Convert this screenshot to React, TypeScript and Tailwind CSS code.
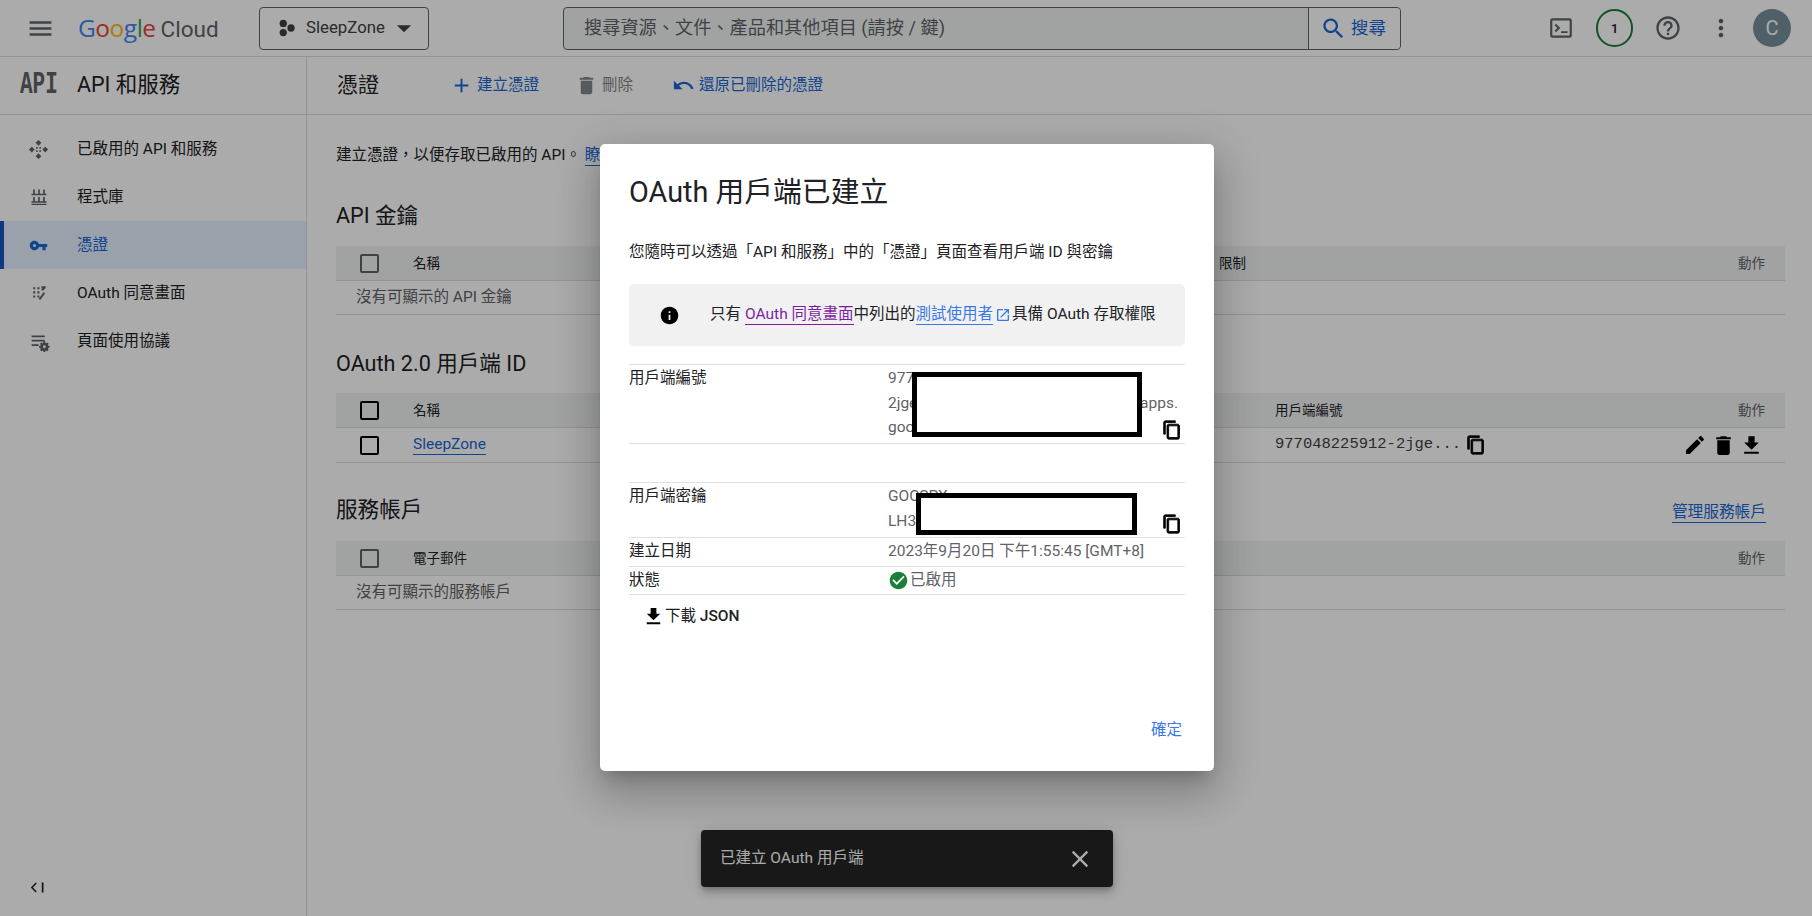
import type { ReactNode } from "react";

const PATHS = {
  menu: "M3 18h18v-2H3v2zm0-5h18v-2H3v2zm0-7v2h18V6H3z",
  add: "M19 13h-6v6h-2v-6H5v-2h6V5h2v6h6v2z",
  trash: "M6 19c0 1.1.9 2 2 2h8c1.1 0 2-.9 2-2V7H6v12zM19 4h-3.5l-1-1h-5l-1 1H5v2h14V4z",
  undo: "M12.5 8c-2.65 0-5.05.99-6.9 2.6L2 7v9h9l-3.62-3.62c1.39-1.16 3.16-1.88 5.12-1.88 3.54 0 6.55 2.31 7.6 5.5l2.37-.78C21.08 11.03 17.15 8 12.5 8z",
  search: "M15.5 14h-.79l-.28-.27C15.41 12.59 16 11.11 16 9.5 16 5.91 13.09 3 9.5 3S3 5.91 3 9.5 5.91 16 9.5 16c1.61 0 3.09-.59 4.23-1.57l.27.28v.79l5 4.99L20.49 19l-4.99-5zm-6 0C7.01 14 5 11.99 5 9.5S7.01 5 9.5 5 14 7.01 14 9.5 11.99 14 9.5 14z",
  help: "M11 18h2v-2h-2v2zm1-16C6.48 2 2 6.48 2 12s4.48 10 10 10 10-4.48 10-10S17.52 2 12 2zm0 18c-4.41 0-8-3.59-8-8s3.59-8 8-8 8 3.59 8 8-3.59 8-8 8zm0-14c-2.21 0-4 1.79-4 4h2c0-1.1.9-2 2-2s2 .9 2 2c0 2-3 1.75-3 5h2c0-2.25 3-2.5 3-5 0-2.21-1.79-4-4-4z",
  more: "M12 8c1.1 0 2-.9 2-2s-.9-2-2-2-2 .9-2 2 .9 2 2 2zm0 2c-1.1 0-2 .9-2 2s.9 2 2 2 2-.9 2-2-.9-2-2-2zm0 6c-1.1 0-2 .9-2 2s.9 2 2 2 2-.9 2-2-.9-2-2-2z",
  key: "M12.65 10C11.83 7.67 9.61 6 7 6c-3.31 0-6 2.69-6 6s2.69 6 6 6c2.61 0 4.83-1.67 5.65-4H17v4h4v-4h2v-4H12.65zM7 14c-1.1 0-2-.9-2-2s.9-2 2-2 2 .9 2 2-.9 2-2 2z",
  copy: "M16 1H4c-1.1 0-2 .9-2 2v14h2V3h12V1zm3 4H8c-1.1 0-2 .9-2 2v14c0 1.1.9 2 2 2h11c1.1 0 2-.9 2-2V7c0-1.1-.9-2-2-2zm0 16H8V7h11v14z",
  edit: "M3 17.25V21h3.75L17.81 9.94l-3.75-3.75L3 17.25zM20.71 7.04c.39-.39.39-1.02 0-1.41l-2.34-2.34c-.39-.39-1.02-.39-1.41 0l-1.83 1.83 3.75 3.75 1.83-1.83z",
  download: "M19 9h-4V3H9v6H5l7 7 7-7zM5 18v2h14v-2H5z",
  info: "M12 2C6.48 2 2 6.48 2 12s4.48 10 10 10 10-4.48 10-10S17.52 2 12 2zm1 15h-2v-6h2v6zm0-8h-2V7h2v2z",
  check: "M12 2C6.48 2 2 6.48 2 12s4.48 10 10 10 10-4.48 10-10S17.52 2 12 2zm-2 15l-5-5 1.41-1.41L10 14.17l7.59-7.59L19 8l-9 9z",
  close: "M19 6.41L17.59 5 12 10.59 6.41 5 5 6.41 10.59 12 5 17.59 6.41 19 12 13.41 17.59 19 19 17.59 13.41 12 19 6.41z",
  external: "M19 19H5V5h7V3H5c-1.11 0-2 .89-2 2v14c0 1.1.89 2 2 2h14c1.1 0 2-.9 2-2v-7h-2v7zM14 3v2h3.59l-9.83 9.83 1.41 1.41L19 6.41V10h2V3h-7z",
  caret: "M7 10l5 5 5-5z",
  project: "M9 3a4 4 0 1 1 0 8 4 4 0 0 1 0-8zm0 10a4 4 0 1 1 0 8 4 4 0 0 1 0-8zm8.5-5a4 4 0 1 1 0 8 4 4 0 0 1 0-8z",
  terminal: "M20 3H4a2 2 0 0 0-2 2v14a2 2 0 0 0 2 2h16a2 2 0 0 0 2-2V5a2 2 0 0 0-2-2zm0 16H4V5h16v14zM6 9.4 7.4 8l4 4-4 4L6 14.6 8.6 12 6 9.4zM12 15h6v1.6h-6V15z",
  services: "M12 2l3 3-3 3-3-3 3-3zM5 9l3 3-3 3-3-3 3-3zm14 0l3 3-3 3-3-3 3-3zm-7 7l3 3-3 3-3-3 3-3zM9.5 9.5h1.6v1.6H9.5zm3.4 0h1.6v1.6h-1.6zm-3.4 3.4h1.6v1.6H9.5zm3.4 0h1.6v1.6h-1.6z",
  library: "M5 3h2v5H5zm6 0h2v5h-2zm6 0h2v5h-2zM3 8h18v2H3zM5 12h2v5H5zm6 0h2v5h-2zm6 0h2v5h-2zM3 17h18v2H3zM3 20h18v1.5H3z",
  consent: "M5 5h2.5v2.5H5zm5 0h2.5v2.5H10zm-5 5h2.5v2.5H5zm0 5h2.5v2.5H5zm5 0h2.5v2.5H10zM15 4h5v2l-3 3h-2V7l1-1h-1zm2.5 7 2 1.2-6 8.3-2-1.2zM10 10h2.5v2.5H10z",
  usage: "M3 5h15v2H3zm0 5h15v2H3zm0 5h8v2H3zm14.5-3 1 .1.3 1.5.9.4 1.3-.8 1.4 1.4-.8 1.3.4.9 1.5.3v2l-1.5.3-.4.9.8 1.3-1.4 1.4-1.3-.8-.9.4-.3 1.5h-2l-.3-1.5-.9-.4-1.3.8-1.4-1.4.8-1.3-.4-.9-1.5-.3v-2l1.5-.3.4-.9-.8-1.3 1.4-1.4 1.3.8.9-.4.3-1.5zm0 4.4a1.6 1.6 0 1 0 0 3.2 1.6 1.6 0 0 0 0-3.2z",
  collapse: "M11 6.5 9.5 5l-7 7 7 7 1.5-1.5L5.5 12zM18 5h2.5v14H18z",
};

function Icon({ name, className }: { name: keyof typeof PATHS; className: string }) {
  return (
    <svg viewBox="0 0 24 24" fill="currentColor" className={`shrink-0 ${className}`}>
      <path d={PATHS[name]} />
    </svg>
  );
}

function Checkbox({ dim }: { dim?: boolean }) {
  return (
    <span className={`ml-[24px] block h-[19px] w-[19px] rounded-[2px] border-2 ${dim ? "border-[#5f6368]" : "border-black"}`} />
  );
}

const NAV = [
  { icon: "services", label: "已啟用的 API 和服務", size: "ml-[23px] h-[23px] w-[23px] text-[#5f6368]" },
  { icon: "library", label: "程式庫", size: "ml-[25px] h-[20px] w-[20px] text-[#5f6368]" },
  { icon: "key", label: "憑證", active: true, size: "ml-[25px] h-[19px] w-[19px] text-[#1967d2]" },
  { icon: "consent", label: "OAuth 同意畫面", size: "ml-[25px] h-[20px] w-[20px] text-[#5f6368]" },
  { icon: "usage", label: "頁面使用協議", size: "ml-[25px] h-[21px] w-[21px] text-[#5f6368]" },
] as const;

function Sidebar() {
  return (
    <aside className="flex w-[307px] shrink-0 flex-col border-r border-[#dadce0]">
      <div className="flex h-[58px] items-center border-b border-[#dadce0]">
        <span className="ml-[20px] w-[57px] origin-center scale-y-[1.45] font-['Liberation_Mono'] text-[21px] font-bold leading-none text-[#5f6368]">API</span>
        <span className="text-[21.5px] text-[#202124]">API 和服務</span>
      </div>
      <nav className="mt-[10px] flex-1">
        {NAV.map((n) => {
          const active = "active" in n;
          return (
            <div
              key={n.label}
              className={`relative flex h-[48px] items-center border-l-4 ${active ? "border-[#1a56c4] bg-[#e8f0fe] text-[#1967d2]" : "border-transparent text-[#202124]"}`}
            >
              <Icon name={n.icon} className={n.size} />
              <span className="absolute left-[73px] top-[13px] text-[15.5px]">{n.label}</span>
            </div>
          );
        })}
      </nav>
      <div className="flex h-[60px] pl-[29px] pt-[23px] text-[#202124]">
        <Icon name="collapse" className="h-[17px] w-[17px]" />
      </div>
    </aside>
  );
}

function Header() {
  return (
    <header className="flex h-[57px] shrink-0 items-center border-b border-[#dadce0]">
      <Icon name="menu" className="ml-[26px] h-[29px] w-[29px] text-[#5f6368]" />
      <div className="ml-[23px] flex w-[158px] items-baseline leading-none">
        <span className="font-['Open_Sans'] text-[24.5px] tracking-[-0.5px]">
          <span className="text-[#4285f4]">G</span>
          <span className="text-[#ea4335]">o</span>
          <span className="text-[#fbbc04]">o</span>
          <span className="text-[#4285f4]">g</span>
          <span className="text-[#34a853]">l</span>
          <span className="text-[#ea4335]">e</span>
        </span>
        <span className="ml-[5px] text-[22.5px] text-[#5f6368]">Cloud</span>
      </div>
      <div className="ml-[23px] flex h-[43px] w-[170px] items-center rounded-[4px] border border-[#5f6368] text-[#3c4043]">
        <Icon name="project" className="ml-[15px] h-[22px] w-[22px]" />
        <span className="ml-[9px] text-[16.8px]">SleepZone</span>
        <Icon name="caret" className="ml-[2px] h-[34px] w-[34px]" />
      </div>
      <div className="ml-[134px] flex h-[43px] w-[838px] items-center rounded-[4px] border border-[#5f6368] bg-[#f1f3f4]">
        <span className="ml-[20px] flex-1 text-[18.2px] text-[#5f6368]">搜尋資源、文件、產品和其他項目 (請按 / 鍵)</span>
        <div className="flex h-full w-[92px] items-center rounded-r-[4px] border-l border-[#5f6368] bg-white text-[#1967d2]">
          <Icon name="search" className="ml-[11px] h-[27px] w-[27px]" />
          <span className="ml-[4px] text-[17.5px]">搜尋</span>
        </div>
      </div>
      <Icon name="terminal" className="ml-[147px] h-[26px] w-[26px] text-[#5f6368]" />
      <span className="ml-[22px] grid h-[38px] w-[37px] place-items-center rounded-full border-2 border-[#188038] text-[13.5px] font-medium text-[#202124]">1</span>
      <Icon name="help" className="ml-[21px] h-[28px] w-[28px] text-[#5f6368]" />
      <Icon name="more" className="ml-[25px] h-[28px] w-[28px] text-[#5f6368]" />
      <span className="ml-[18px] grid h-[38px] w-[38px] place-items-center rounded-full bg-[#78909c] text-[20px] text-white">C</span>
    </header>
  );
}

function Action({ icon, label, dim, className }: { icon: keyof typeof PATHS; label: string; dim?: boolean; className: string }) {
  return (
    <div className={`flex items-center ${dim ? "text-[#80868b]" : "text-[#1967d2]"} ${className}`}>
      <Icon name={icon} className="h-[23px] w-[23px]" />
      <span className="ml-[4px] text-[15.5px]">{label}</span>
    </div>
  );
}

function THead({ cols, dim }: { cols: [string, string, number?]; dim?: boolean }) {
  const [first, second, firstW] = cols;
  return (
    <div className="flex h-[35px] items-center border-b border-[#dadce0] bg-[#f1f3f4] text-[13.5px] text-[#202124]">
      <div className="w-[77px]">
        <Checkbox dim={dim} />
      </div>
      <div style={{ width: firstW }} className={firstW ? "" : "flex-1"}>{first}</div>
      {second && <div className="flex-1">{second}</div>}
      <div className="pr-[20px] text-[#5f6368]">動作</div>
    </div>
  );
}

function EmptyRow({ children }: { children: ReactNode }) {
  return <div className="flex h-[34px] items-center border-b border-[#dadce0] pl-[20px] text-[15.5px] text-[#5f6368]">{children}</div>;
}

function Main() {
  return (
    <main className="min-w-0 flex-1">
      <div className="flex h-[58px] items-center border-b border-[#dadce0] pl-[30px]">
        <span className="text-[21px] text-[#202124]">憑證</span>
        <Action icon="add" label="建立憑證" className="ml-[71px]" />
        <Action icon="trash" label="刪除" dim className="ml-[36px]" />
        <Action icon="undo" label="還原已刪除的憑證" className="ml-[39px]" />
      </div>
      <div className="pl-[29px] pr-[27px] pt-[28px]">
        <p className="text-[15.5px] leading-[24px] text-[#202124]">
          建立憑證，以便存取已啟用的 API。{" "}
          <span className="inline-block border-b border-[#1967d2] leading-[20px] text-[#1967d2]">瞭解詳情</span>
        </p>

        <h2 className="mt-[34px] h-[30px] text-[21.6px] leading-[30px] text-[#202124]">API 金鑰</h2>
        <div className="mt-[15px]">
          <THead cols={["名稱", "限制", 806]} dim />
          <EmptyRow>沒有可顯示的 API 金鑰</EmptyRow>
        </div>

        <h2 className="mt-[34px] h-[30px] text-[21.6px] leading-[30px] text-[#202124]">OAuth 2.0 用戶端 ID</h2>
        <div className="mt-[14px]">
          <THead cols={["名稱", "用戶端編號", 862]} />
          <div className="flex h-[35px] items-center border-b border-[#dadce0]">
            <div className="w-[77px]">
              <Checkbox />
            </div>
            <div className="w-[862px] text-[15.5px] text-[#1967d2]">
              <span className="inline-block border-b border-[#1967d2] leading-[20px]">SleepZone</span>
            </div>
            <span className="font-['Liberation_Mono'] text-[15.5px] text-[#3c4043]">977048225912-2jge...</span>
            <Icon name="copy" className="ml-[5px] h-[20px] w-[20px] stroke-current stroke-1 text-black" />
            <div className="ml-auto flex items-center pr-[21px] text-black">
              <Icon name="edit" className="h-[24px] w-[24px]" />
              <Icon name="trash" className="ml-[4px] h-[25px] w-[25px]" />
              <Icon name="download" className="ml-[3px] h-[25px] w-[25px]" />
            </div>
          </div>
        </div>

        <div className="mt-[32px] flex h-[30px] items-center justify-between pr-[19px]">
          <h2 className="text-[21.6px] text-[#202124]">服務帳戶</h2>
          <span className="mt-[4px] border-b border-[#1967d2] text-[15.7px] leading-[20px] text-[#1967d2]">管理服務帳戶</span>
        </div>
        <div className="mt-[16px]">
          <THead cols={["電子郵件", ""]} dim />
          <EmptyRow>沒有可顯示的服務帳戶</EmptyRow>
        </div>
      </div>
    </main>
  );
}

function DetailRow({ label, children, className }: { label: string; children: ReactNode; className: string }) {
  return (
    <div className={`relative flex border-b border-[#e0e0e0] text-[15.5px] ${className}`}>
      <div className="w-[259px] shrink-0 text-[#202124]">{label}</div>
      <div className="min-w-0 flex-1 text-[#5f6368]">{children}</div>
    </div>
  );
}

function Dialog() {
  return (
    <div className="absolute left-[600px] top-[144px] flex h-[627px] w-[614px] flex-col rounded-[5px] bg-white px-[29px] pt-[28px] shadow-[0_11px_15px_-7px_rgba(0,0,0,0.2),0_24px_38px_3px_rgba(0,0,0,0.14),0_9px_46px_8px_rgba(0,0,0,0.12)]">
      <h1 className="h-[40px] text-[28.8px] leading-[40px] text-[#202124]">OAuth 用戶端已建立</h1>
      <p className="mt-[28px] text-[15.5px] leading-[24px] text-[#202124]">您隨時可以透過「API 和服務」中的「憑證」頁面查看用戶端 ID 與密鑰</p>

      <div className="mt-[20px] flex h-[62px] items-center rounded-[5px] bg-[#f1f1f1] text-[15.5px] text-[#202124]">
        <Icon name="info" className="ml-[30px] h-[21px] w-[21px] text-black" />
        <span className="ml-[30px]">只有 </span>
        <span className="ml-[4px] border-b border-[#7b1fa2] leading-[19px] text-[#7b1fa2]">OAuth 同意畫面</span>
        <span>中列出的</span>
        <span className="border-b border-[#3b78e7] leading-[19px] text-[#3b78e7]">測試使用者</span>
        <Icon name="external" className="mx-[1.5px] h-[16px] w-[16px] text-[#3b78e7]" />
        <span>具備 OAuth 存取權限</span>
      </div>

      <div className="mt-[18px] border-t border-[#e0e0e0]">
        <DetailRow label="用戶端編號" className="h-[79px] pt-[1px] leading-[24.5px]">
          <div>977048225912-</div>
          <div className="flex justify-between pr-[7px]">
            <span>2jge</span>
            <span>apps.</span>
          </div>
          <div>googleusercontent.com</div>
          <div className="absolute left-[283px] top-[7px] h-[65px] w-[230px] border-[5px] border-black bg-white" />
          <Icon name="copy" className="absolute right-[3px] top-[55px] h-[20px] w-[20px] stroke-current stroke-1 text-black" />
        </DetailRow>
      </div>

      <div className="mt-[38px] border-t border-[#e0e0e0]">
        <DetailRow label="用戶端密鑰" className="h-[55px] pt-[1px] leading-[24.5px]">
          <div>GOCSPX-</div>
          <div>LH3</div>
          <div className="absolute left-[287px] top-[10px] h-[42px] w-[221px] border-[5px] border-black bg-white" />
          <Icon name="copy" className="absolute right-[3px] top-[31px] h-[20px] w-[20px] stroke-current stroke-1 text-black" />
        </DetailRow>
        <DetailRow label="建立日期" className="h-[29px] items-center">2023年9月20日 下午1:55:45 [GMT+8]</DetailRow>
        <DetailRow label="狀態" className="h-[28px] items-center">
          <div className="flex items-center">
            <Icon name="check" className="h-[21px] w-[21px] text-[#188038]" />
            <span className="ml-[1px]">已啟用</span>
          </div>
        </DetailRow>
      </div>

      <div className="mt-[10px] flex items-center pl-[13px] text-[15.5px] text-[#202124]">
        <Icon name="download" className="h-[23px] w-[23px] text-black" />
        <span>下載 <span className="font-medium">JSON</span></span>
      </div>

      <div className="mt-auto pb-[29px] pr-[3px] text-right text-[15.5px] leading-[24px] text-[#3b78e7]">確定</div>
    </div>
  );
}

export default function App() {
  return (
    <div className="relative flex h-[916px] w-[1812px] flex-col overflow-hidden bg-white [font-family:Roboto,'Noto_Sans_CJK_TC',sans-serif]">
      <Header />
      <div className="flex min-h-0 flex-1">
        <Sidebar />
        <Main />
      </div>
      <div className="absolute left-[701px] top-[830px] flex h-[57px] w-[412px] items-center rounded-[4px] bg-[#252525] text-[15.5px] text-white shadow-[0_3px_5px_-1px_rgba(0,0,0,0.2),0_6px_10px_0_rgba(0,0,0,0.14),0_1px_18px_0_rgba(0,0,0,0.12)]">
        <span className="ml-[19px] flex-1">已建立 OAuth 用戶端</span>
        <Icon name="close" className="mr-[19px] h-[28px] w-[28px]" />
      </div>
      <div className="absolute inset-0 bg-[#00000054]" />
      <Dialog />
    </div>
  );
}
